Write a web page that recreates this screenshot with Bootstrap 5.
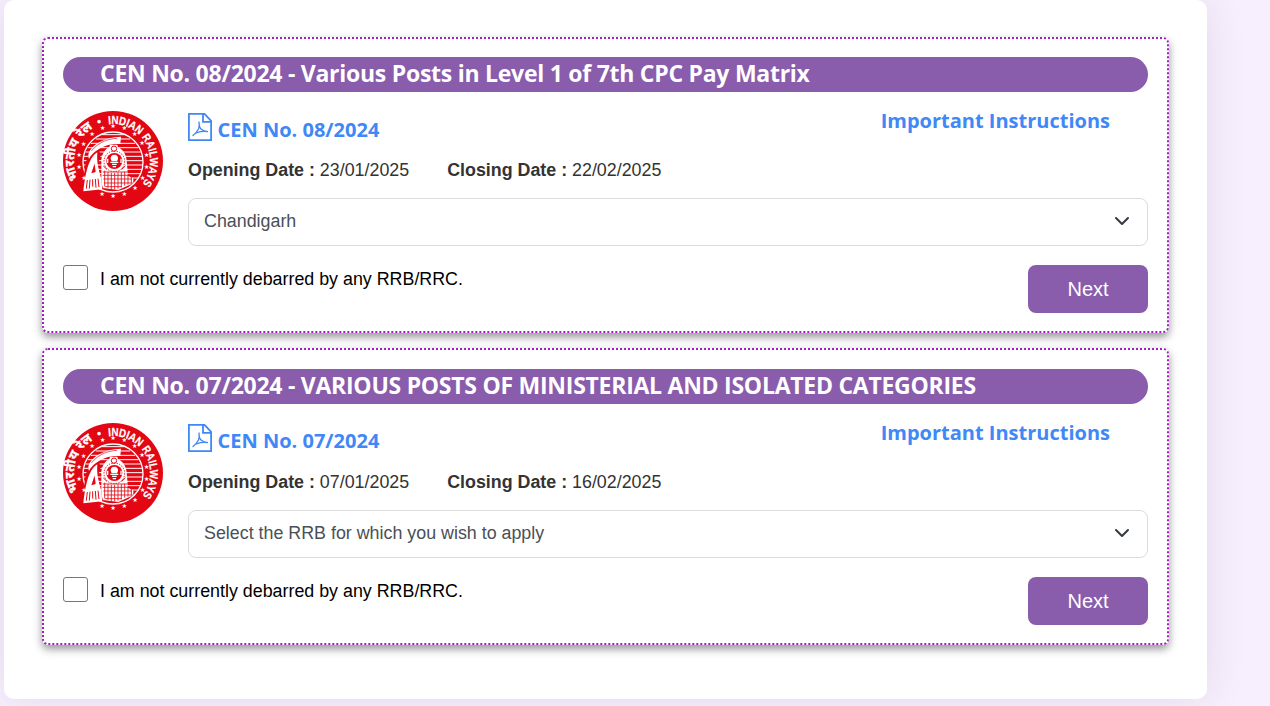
<!DOCTYPE html>
<html lang="en">
<head>
<meta charset="utf-8">
<meta name="viewport" content="width=device-width, initial-scale=1">
<title>RRB Apply</title>
<link href="https://cdn.jsdelivr.net/npm/bootstrap@5.3.0/dist/css/bootstrap.min.css" rel="stylesheet">
<style>
body{background:#f7effd;font-family:"Liberation Sans",Arial,sans-serif;font-size:17.85px;color:#333;height:706px;overflow:hidden}
.sheet{width:1203px;height:699px;margin-left:4px;padding:37px 38px 0;border-radius:10px;box-shadow:0 0 40px rgba(60,40,100,.11)}
.notice{height:296px;border:2px dotted #a020c0;border-radius:6px;padding:18px 19px 0;box-shadow:0 4px 8px rgba(0,0,0,.42);background:#fff}
.notice + .notice{margin-top:15px;height:297px;padding-top:19px}
.notice-title{height:35px;border-radius:18px;background:#895cac;color:#fff;padding-left:37px;font:700 23px/33px "Open Sans",sans-serif;letter-spacing:-.26px;margin:0 0 19px;white-space:nowrap}
.open{font-family:"Open Sans",sans-serif;font-weight:700;font-size:20px;color:#4088f6;text-decoration:none;line-height:26px;white-space:nowrap}
.info{height:87px}
.pdf-line{height:36px;padding-top:2px}
.pdf-name{padding-top:4px;margin-left:5.500px}
.notice + .notice .pdf-link{margin-top:-1px}
.imp{margin-right:38px;margin-top:-5px}
.dates{line-height:24px;margin-top:11px}
.closing{margin-left:33px}
.rrb{height:48px;font-size:17.85px;color:#495057;border:1px solid #dcdcdc;border-radius:8px;padding:0 45px 2px 15px;background-size:16px 16px;background-position:right 17px top 14px}
.emblem{width:100px;height:100px;margin-right:25px}
.agree-row{margin-top:19px}
.agree{width:25px;height:25px;border:1px solid #767676;border-radius:3px!important;margin:0 12px 0 0}
.agree-text{color:#000;line-height:28px}
.btn-next{width:120px;height:48px;background:#895cac;color:#fff;font-size:20px;border:0;border-radius:8px}
</style>
</head>
<body>
<svg width="0" height="0" class="position-absolute" aria-hidden="true">
<defs>
<symbol id="pdf" viewBox="0 0 24 28"><path d="M.9.9h15.600l6.600 7v19.200H.9zM15 .9v8h8" fill="none" stroke="currentColor" stroke-width="1.800"/><path d="M5 22.500c2.500-2 4.500-4.500 5.500-6.500c.9-2.500.8-5 .5-7.500c0 3 .5 6 2 7.500c2 2 4 2.500 7 2.700c-4-.7-8-.2-11.500 1.100" fill="none" stroke="currentColor" stroke-width="1.300" stroke-linecap="round"/></symbol>
<path id="arcEn" d="M13 50a37 37 0 1 1 74 0a37 37 0 0 1 -74 0"/>
<path id="arcHi" d="M18.500 72.500a38 38 0 0 1 20-59"/>
<symbol id="emblem" viewBox="0 0 100 100">
<circle cx="50" cy="50" r="50" fill="#e30613"/>
<g transform="translate(-8 -11) scale(.33333)">
<circle cx="174" cy="186" r="90" fill="none" stroke="#fff" stroke-width="4"/>
<path d="M141 104h66M122 117h104M108 130h132M98 143h152M91 156h166M87 169h174M85 182h178M85 195h178M87 208h174M91 221h166M98 234h152" stroke="#fff" stroke-width="3"/>
<path d="M91 196c4-28 18-46 40-53l6 24l-22 62l-27 40l-3-30z" fill="#e30613"/>
<path d="M198 110l-2 22c-30-2-55 6-74 22c-8 6-15 14-20 22c-8-14 6-35 28-48c20-12 44-18 68-18z" fill="#fff"/>
<path d="M186 115c-30 2-55 12-77 38" fill="none" stroke="#e30613" stroke-width="2"/>
<path d="M127 157c-22 14-34 46-42 117l57-6l-4-34c-5-20-14-43-11-77z" fill="#fff"/>
<path d="M119 190l-10 30l13-4c-1-10-3-18-3-26z" fill="#e30613"/>
<path d="M97 240l-3 26M105 239l-2 27M113 238v27M121 237l2 26M129 236l3 25" stroke="#e30613" stroke-width="3"/>
<path d="M139 250v-70c2-22 15-35 24-38l2-8h22l2 8c12 5 24 18 26 40l4 45l16 8v15l-45 20l-46-6z" fill="#fff"/>
<circle cx="177" cy="146" r="8" fill="none" stroke="#e30613" stroke-width="3"/>
<circle cx="178" cy="184" r="31" fill="none" stroke="#e30613" stroke-width="3" stroke-dasharray="4 4"/>
<circle cx="178" cy="183" r="24" fill="#e30613"/>
<path d="M178 164c8 0 12 6 11 13l-3 7h-16l-3-7c-1-7 3-13 11-13z" fill="#fff"/><path d="M166 187h24M171 193h14M173 200h10M158 176v13M198 176v13" stroke="#fff" stroke-width="4"/>
<path d="M143 216h76M143 226h80M145 237h86M147 249h86M150 260h50" stroke="#e30613" stroke-width="2.500"/>
<path d="M149 212v47M159 216v47M169 219v48M179 219v49M189 217v49M199 217v45M209 215v42M219 222v32M229 227v24" stroke="#e30613" stroke-width="2.500"/>
<path d="M145 198l11 10M211 198l-11 10" stroke="#e30613" stroke-width="3"/>
<g fill="#fff" font-family="DejaVu Sans" font-size="19" text-anchor="middle"><text x="143" y="90">★</text><text x="174" y="84">★</text><text x="208" y="90">★</text><text x="239" y="109">★</text><text x="261" y="136">★</text><text x="275" y="170">★</text><text x="275" y="207">★</text><text x="263" y="241">★</text><text x="240" y="269">★</text><text x="208" y="288">★</text><text x="174" y="295">★</text><text x="141" y="289">★</text><text x="111" y="270">★</text><text x="87" y="241">★</text><text x="72" y="207">★</text><text x="72" y="171">★</text><text x="86" y="137">★</text><text x="111" y="108">★</text></g>
<circle cx="132" cy="65" r="5.500" fill="#fff"/>
</g>
<text fill="#fff" stroke="#fff" stroke-width=".2" font-weight="700" font-family="Liberation Sans, sans-serif" font-size="11.500"><textPath href="#arcEn" startOffset="53.500" textLength="87" lengthAdjust="spacingAndGlyphs">INDIAN RAILWAYS</textPath></text>
<text fill="#fff" stroke="#fff" stroke-width=".3" font-family="'Noto Sans Devanagari','Noto Sans','Lohit Devanagari',FreeSans,sans-serif" font-size="13" font-weight="700"><textPath href="#arcHi" startOffset="5">भारतीय रेल</textPath></text>
</symbol>
</defs>
</svg>
<main class="sheet bg-white">
<section class="notice">
<h2 class="notice-title">CEN No. 08/2024 - Various Posts in Level 1 of 7th CPC Pay Matrix</h2>
<div class="d-flex align-items-start">
<svg class="emblem flex-shrink-0"><use href="#emblem"/></svg>
<div class="flex-grow-1">
<div class="info">
<div class="d-flex justify-content-between pdf-line"><a href="#" class="open pdf-link d-flex"><svg width="24" height="28"><use href="#pdf"/></svg><span class="pdf-name">CEN No. 08/2024</span></a><a href="#" class="open imp">Important Instructions</a></div>
<div class="dates"><b>Opening Date :</b> 23/01/2025 <span class="closing"><b>Closing Date :</b> 22/02/2025</span></div>
</div>
<select class="form-select rrb" aria-label="RRB"><option>Chandigarh</option></select>
</div>
</div>
<div class="d-flex align-items-start agree-row"><input type="checkbox" class="form-check-input agree" id="a1"><label class="agree-text" for="a1">I am not currently debarred by any RRB/RRC.</label><button class="btn btn-next ms-auto">Next</button></div>
</section>
<section class="notice">
<h2 class="notice-title">CEN No. 07/2024 - VARIOUS POSTS OF MINISTERIAL AND ISOLATED CATEGORIES</h2>
<div class="d-flex align-items-start">
<svg class="emblem flex-shrink-0"><use href="#emblem"/></svg>
<div class="flex-grow-1">
<div class="info">
<div class="d-flex justify-content-between pdf-line"><a href="#" class="open pdf-link d-flex"><svg width="24" height="28"><use href="#pdf"/></svg><span class="pdf-name">CEN No. 07/2024</span></a><a href="#" class="open imp">Important Instructions</a></div>
<div class="dates"><b>Opening Date :</b> 07/01/2025 <span class="closing"><b>Closing Date :</b> 16/02/2025</span></div>
</div>
<select class="form-select rrb" aria-label="RRB"><option>Select the RRB for which you wish to apply</option></select>
</div>
</div>
<div class="d-flex align-items-start agree-row"><input type="checkbox" class="form-check-input agree" id="a2"><label class="agree-text" for="a2">I am not currently debarred by any RRB/RRC.</label><button class="btn btn-next ms-auto">Next</button></div>
</section>
</main>
<script src="https://cdn.jsdelivr.net/npm/bootstrap@5.3.0/dist/js/bootstrap.bundle.min.js"></script>
</body>
</html>
